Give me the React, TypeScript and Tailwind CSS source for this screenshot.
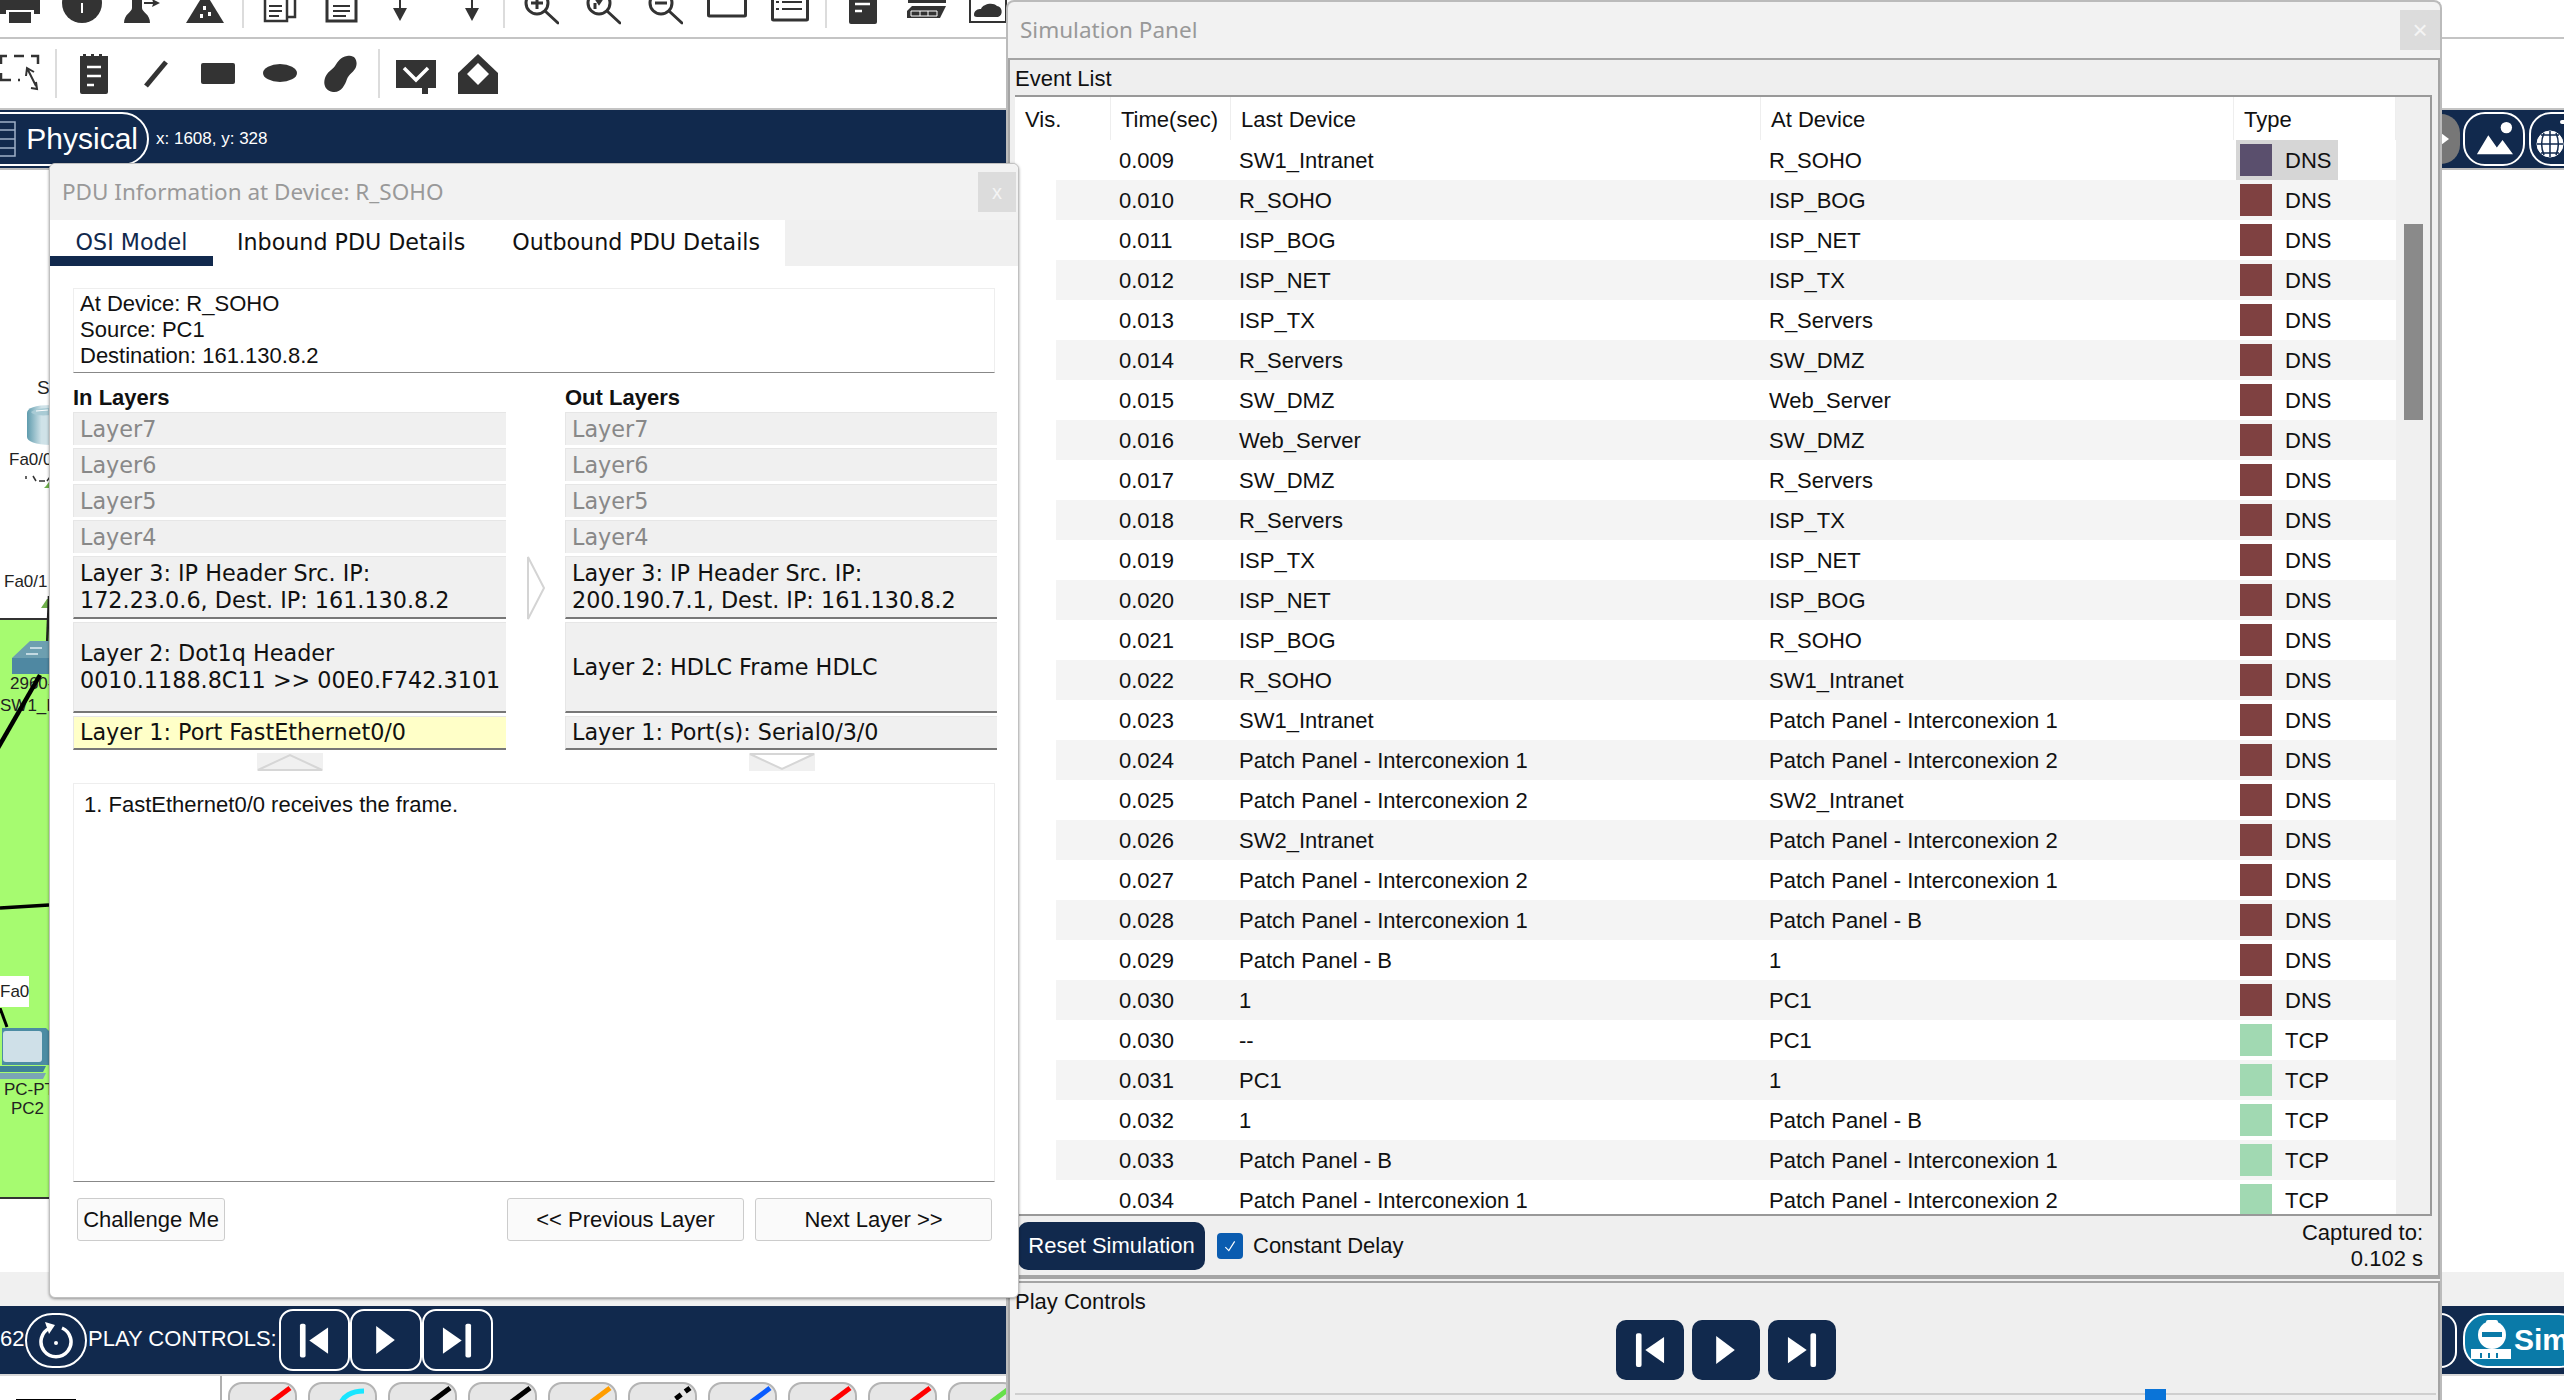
const rows: [string, string, string, string][] = [
  ["0.009", "SW1_Intranet", "R_SOHO", "DNS"],
  ["0.010", "R_SOHO", "ISP_BOG", "DNS"],
  ["0.011", "ISP_BOG", "ISP_NET", "DNS"],
  ["0.012", "ISP_NET", "ISP_TX", "DNS"],
  ["0.013", "ISP_TX", "R_Servers", "DNS"],
  ["0.014", "R_Servers", "SW_DMZ", "DNS"],
  ["0.015", "SW_DMZ", "Web_Server", "DNS"],
  ["0.016", "Web_Server", "SW_DMZ", "DNS"],
  ["0.017", "SW_DMZ", "R_Servers", "DNS"],
  ["0.018", "R_Servers", "ISP_TX", "DNS"],
  ["0.019", "ISP_TX", "ISP_NET", "DNS"],
  ["0.020", "ISP_NET", "ISP_BOG", "DNS"],
  ["0.021", "ISP_BOG", "R_SOHO", "DNS"],
  ["0.022", "R_SOHO", "SW1_Intranet", "DNS"],
  ["0.023", "SW1_Intranet", "Patch Panel - Interconexion 1", "DNS"],
  ["0.024", "Patch Panel - Interconexion 1", "Patch Panel - Interconexion 2", "DNS"],
  ["0.025", "Patch Panel - Interconexion 2", "SW2_Intranet", "DNS"],
  ["0.026", "SW2_Intranet", "Patch Panel - Interconexion 2", "DNS"],
  ["0.027", "Patch Panel - Interconexion 2", "Patch Panel - Interconexion 1", "DNS"],
  ["0.028", "Patch Panel - Interconexion 1", "Patch Panel - B", "DNS"],
  ["0.029", "Patch Panel - B", "1", "DNS"],
  ["0.030", "1", "PC1", "DNS"],
  ["0.030", "--", "PC1", "TCP"],
  ["0.031", "PC1", "1", "TCP"],
  ["0.032", "1", "Patch Panel - B", "TCP"],
  ["0.033", "Patch Panel - B", "Patch Panel - Interconexion 1", "TCP"],
  ["0.034", "Patch Panel - Interconexion 1", "Patch Panel - Interconexion 2", "TCP"],
]

const cables = ["#ff0000", "#19e6ff", "#000000", "#000000", "#ff9d00", "#000000", "#0a5cff", "#ff0000", "#ff0000", "#66e04a"]

function SkipBack({ className }: { className: string }) {
  return (
    <svg viewBox="0 0 32 36" className={className} fill="#fff">
      <rect x="1" y="0" width="6" height="36" rx="2" />
      <path d="M31 4v28L11 18z" />
    </svg>
  )
}

function Play({ className }: { className: string }) {
  return (
    <svg viewBox="0 0 20 30" className={className} fill="#fff">
      <path d="M0 0l20 15L0 30z" />
    </svg>
  )
}

function SkipNext({ className }: { className: string }) {
  return (
    <svg viewBox="0 0 32 36" className={className} fill="#fff">
      <rect x="25" y="0" width="6" height="36" rx="2" />
      <path d="M1 4v28l20-14z" />
    </svg>
  )
}

function Sep({ className }: { className: string }) {
  return <div className={`w-[2px] shrink-0 bg-[#dcdcdc] ${className}`} />
}

function Magnifier({ mark }: { mark: string }) {
  return (
    <svg viewBox="0 0 36 28" className="h-[28px] w-[36px] shrink-0" fill="none" stroke="#333" strokeWidth="3">
      <circle cx="14" cy="3" r="11" />
      <path d="M22 11l13 12" strokeLinecap="round" />
      <path d={mark} />
    </svg>
  )
}

function TopToolbar() {
  return (
    <div className="flex h-[39px] shrink-0 items-start overflow-hidden border-b-2 border-[#c4c4c4] bg-white">
      <svg viewBox="0 0 40 28" className="h-[28px] w-[40px] shrink-0" fill="#333">
        <path d="M0 0h40v14h-6v-4H6v4H0z" />
        <rect x="9" y="12" width="22" height="11" />
      </svg>
      <svg viewBox="0 0 40 28" className="ml-[22px] h-[28px] w-[40px] shrink-0" fill="#333">
        <circle cx="20" cy="3" r="20" />
        <rect x="19" y="3" width="2" height="10" fill="#fff" />
      </svg>
      <svg viewBox="0 0 36 28" className="ml-[22px] h-[28px] w-[36px] shrink-0" fill="#333">
        <path d="M8 0h10v8c0 4 8 6 8 15H0c0-9 8-11 8-15z" />
        <path d="M20 2h9l-1-3 8 4-8 4 1-3h-9z" />
      </svg>
      <svg viewBox="0 0 38 28" className="ml-[26px] h-[28px] w-[38px] shrink-0" fill="#333">
        <path d="M19-8l19 31H0z" />
        <path d="M17 6h3v4h-3zM22 12h3v4h-3zM14 14h3v4h-3z" fill="#fff" />
      </svg>
      <Sep className="ml-[18px] h-[28px]" />
      <svg viewBox="0 0 34 28" className="ml-[19px] h-[28px] w-[34px] shrink-0" fill="#fff" stroke="#333" strokeWidth="2.5">
        <rect x="12" y="-6" width="20" height="23" />
        <rect x="2" y="-4" width="22" height="25" />
        <path d="M6 6h13M6 11h13M6 16h10" strokeWidth="2" />
      </svg>
      <svg viewBox="0 0 34 28" className="ml-[28px] h-[28px] w-[34px] shrink-0" fill="#fff" stroke="#333" strokeWidth="3">
        <rect x="2" y="-6" width="29" height="27" />
        <path d="M8 6h17M8 11h17M8 16h13" strokeWidth="2" />
      </svg>
      <svg viewBox="0 0 14 28" className="ml-[34px] h-[28px] w-[14px] shrink-0" fill="#333">
        <rect x="6" y="0" width="2" height="10" />
        <path d="M0 8h14l-7 13z" />
      </svg>
      <svg viewBox="0 0 14 28" className="ml-[58px] h-[28px] w-[14px] shrink-0" fill="#333">
        <rect x="6" y="0" width="2" height="10" />
        <path d="M0 8h14l-7 13z" />
      </svg>
      <Sep className="ml-[24px] h-[28px]" />
      <div className="ml-[18px] flex gap-[26px]">
        <Magnifier mark="M8 3h12M14-3V9" />
        <Magnifier mark="M10-3l4 6 4-6M10 3v6" />
        <Magnifier mark="M8 3h12" />
      </div>
      <svg viewBox="0 0 40 28" className="ml-[24px] h-[28px] w-[40px] shrink-0" fill="none" stroke="#333" strokeWidth="3">
        <rect x="1.5" y="-6" width="37" height="22" rx="1" />
      </svg>
      <svg viewBox="0 0 38 28" className="ml-[24px] h-[28px] w-[38px] shrink-0" fill="none" stroke="#333" strokeWidth="3">
        <rect x="1.5" y="-6" width="35" height="26" rx="1" />
        <path d="M11 2h20M11 9h20M5 2h3M5 9h3" strokeWidth="2" />
      </svg>
      <Sep className="ml-[16px] h-[28px]" />
      <svg viewBox="0 0 28 28" className="ml-[22px] h-[28px] w-[28px] shrink-0">
        <rect x="0" y="-4" width="28" height="28" rx="2" fill="#333" />
        <path d="M6 4h15M6 11h7" stroke="#fff" strokeWidth="2.5" />
      </svg>
      <svg viewBox="0 0 40 28" className="ml-[29px] h-[28px] w-[40px] shrink-0" fill="#333">
        <rect x="2" y="-2" width="38" height="5" />
        <path d="M6 6h34l-6 12H1v-7z" />
        <path d="M5 11h26v5H5z" fill="none" stroke="#fff" />
        <path d="M14 11v5M22 11v5" stroke="#fff" />
      </svg>
      <svg viewBox="0 0 38 28" className="ml-[23px] h-[28px] w-[38px] shrink-0">
        <rect x="1" y="-5" width="36" height="27" fill="#fff" stroke="#333" strokeWidth="2" />
        <path d="M5 15c0-5 4-6 7-6 2-5 12-7 16-3 5 0 7 9 1 11H8c-2 0-3-1-3-2z" fill="#333" />
      </svg>
    </div>
  )
}

function SecondToolbar() {
  return (
    <div className="flex h-[71px] shrink-0 items-start overflow-hidden border-b-2 border-[#c4c4c4] bg-white">
      <svg viewBox="0 0 40 42" className="mt-[15px] h-[42px] w-[40px] shrink-0" fill="none" stroke="#333" strokeWidth="2.5">
        <path d="M1 10V2h6M14 2h10M31 2h7v8M1 19v7h10M18 26h2" />
        <path d="M27 14l9 18M26 22l1-8 7 4M31 34l6 1-1-7" strokeWidth="2" />
      </svg>
      <Sep className="ml-[15px] mt-[10px] h-[49px]" />
      <svg viewBox="0 0 28 42" className="ml-[23px] mt-[15px] h-[42px] w-[28px] shrink-0">
        <path d="M0 2h3v-2h3v2h5v-2h3v2h5v-2h3v2h6v36a2 2 0 0 1-2 2H2a2 2 0 0 1-2-2z" fill="#333" />
        <path d="M7 13h14M7 22h14M7 31h7" stroke="#fff" strokeWidth="2.5" />
      </svg>
      <svg viewBox="0 0 27 42" className="ml-[35px] mt-[15px] h-[42px] w-[27px] shrink-0">
        <path d="M3 32L23 8" stroke="#333" strokeWidth="5" />
      </svg>
      <svg viewBox="0 0 34 42" className="ml-[31px] mt-[15px] h-[42px] w-[34px] shrink-0">
        <rect x="0" y="9" width="34" height="21" rx="2" fill="#333" />
      </svg>
      <svg viewBox="0 0 34 42" className="ml-[28px] mt-[15px] h-[42px] w-[34px] shrink-0">
        <ellipse cx="17" cy="19" rx="17" ry="9" fill="#333" />
      </svg>
      <svg viewBox="0 0 34 42" className="ml-[27px] mt-[15px] h-[42px] w-[34px] shrink-0">
        <path d="M23 2c8-2 11 5 9 11-2 5-7 7-9 12-2 6-6 14-14 13C1 37-1 30 1 24c2-6 7-8 10-12 3-5 6-9 12-10z" fill="#333" />
      </svg>
      <Sep className="ml-[20px] mt-[10px] h-[49px]" />
      <svg viewBox="0 0 40 42" className="ml-[16px] mt-[15px] h-[42px] w-[40px] shrink-0">
        <path d="M0 6h40v28H32v6h-6v-6H0z" fill="#333" />
        <path d="M8 14l12 12 12-12" fill="none" stroke="#fff" strokeWidth="3.5" />
      </svg>
      <svg viewBox="0 0 40 42" className="ml-[22px] mt-[15px] h-[42px] w-[40px] shrink-0">
        <path d="M20 0l20 19v21H0V19z" fill="#333" />
        <path d="M20 9l11 11-11 11L9 20z" fill="#fff" />
      </svg>
    </div>
  )
}

function PhysicalBar() {
  return (
    <div className="flex h-[60px] shrink-0 items-center justify-between overflow-hidden border-b-2 border-[#bcbcbc] bg-[#11294d]">
      <div className="flex items-center">
        <div className="-ml-[30px] flex h-[54px] w-[179px] items-center justify-between rounded-r-[27px] border-2 border-white pl-[28px] pr-[9px]">
          <svg viewBox="0 0 16 36" className="h-[36px] w-[16px]" fill="none" stroke="#9fb0c8" strokeWidth="1.5">
            <rect x="-4" y="1" width="19" height="34" />
            <path d="M-4 9h19M-4 18h19M-4 27h19" />
          </svg>
          <span className="text-[30px] leading-none text-white">Physical</span>
        </div>
        <span className="ml-[7px] text-[17px] text-white">x: 1608, y: 328</span>
      </div>
      <div className="flex w-[123px] shrink-0 items-center overflow-hidden">
        <div className="flex h-[50px] w-[19px] shrink-0 items-center rounded-r-[25px] bg-[#777]">
          <div className="h-0 w-0 border-y-[6px] border-l-[8px] border-y-transparent border-l-white" />
        </div>
        <div className="ml-[3px] flex h-[54px] w-[62px] shrink-0 items-center justify-center rounded-[22px] border-2 border-white">
          <svg viewBox="0 0 40 36" className="h-[36px] w-[38px]" fill="#fff">
            <circle cx="33" cy="6" r="6" />
            <path d="M2 34l12-20 9 13 6-8 11 15z" />
          </svg>
        </div>
        <div className="ml-[4px] flex h-[54px] w-[62px] shrink-0 items-center justify-start rounded-[22px] border-2 border-white pl-[5px]">
          <svg viewBox="0 0 32 40" className="h-[40px] w-[32px]" fill="none" stroke="#fff">
            <circle cx="14" cy="25" r="13" fill="#fff" />
            <path d="M1 25h26M14 12v26M5 16h18M5 34h18M8 14c-3 7-3 15 0 22M20 14c3 7 3 15 0 22" stroke="#11294d" strokeWidth="1.5" />
            <path d="M26 3h6" strokeWidth="4" strokeLinecap="round" />
          </svg>
        </div>
      </div>
    </div>
  )
}

function Canvas() {
  return (
    <div className="relative h-[1102px] shrink-0 overflow-hidden bg-white">
      <div className="absolute left-0 top-[448px] h-[581px] w-[60px] border-y-2 border-[#333] bg-[#a6fb70]" />
      <span className="absolute left-[37px] top-[207px] text-[19px] leading-[22px] text-[#222]">Se</span>
      <svg viewBox="0 0 24 40" className="absolute left-[27px] top-[235px] h-[40px] w-[24px]">
        <defs>
          <linearGradient id="rtr" x1="0" x2="1">
            <stop offset="0" stopColor="#5e9bad" />
            <stop offset="0.6" stopColor="#cfe2e8" />
          </linearGradient>
        </defs>
        <path d="M0 8c0-5 8-8 24-8v40C8 40 0 36 0 32z" fill="url(#rtr)" />
        <path d="M4 7c4-3 10-4 20-4v7C12 11 6 10 4 7z" fill="#a9cbd5" />
        <path d="M9 6l12-1" stroke="#fff" />
      </svg>
      <span className="absolute left-[9px] top-[280px] text-[17px] leading-[20px] text-[#222]">Fa0/0</span>
      <svg viewBox="0 0 49 20" className="absolute left-0 top-[304px] h-[20px] w-[49px]">
        <path d="M26 2v3M33 2l3 5M39 7h6M50 3l-3 4" stroke="#333" strokeWidth="1.5" fill="none" />
        <path d="M46 12l3-4v6h-5z" fill="#6fb04b" />
      </svg>
      <span className="absolute left-[4px] top-[402px] text-[17px] leading-[20px] text-[#222]">Fa0/1</span>
      <svg viewBox="0 0 49 60" className="absolute left-0 top-[426px] h-[60px] w-[49px]">
        <path d="M41 12l6-9 2 0v9z" fill="#6fb04b" />
        <path d="M49 0L47 50" stroke="#222" strokeWidth="2.5" />
      </svg>
      <svg viewBox="0 0 49 40" className="absolute left-0 top-[470px] h-[40px] w-[49px]">
        <path d="M12 18L30 1h19v17z" fill="#6d9fb0" />
        <path d="M12 18h37v16H12z" fill="#4f88a2" />
        <path d="M30 8h12M26 14h12" stroke="#dfeef2" strokeWidth="1.5" />
      </svg>
      <span className="absolute left-[10px] top-[504px] text-[17px] leading-[20px] text-[#222]">2960-</span>
      <span className="absolute left-0 top-[526px] text-[17px] leading-[20px] text-[#222]">SW1_I</span>
      <svg viewBox="0 0 49 80" className="absolute left-0 top-[500px] h-[80px] w-[49px]">
        <path d="M40 5L-2 78" stroke="#000" strokeWidth="4.5" />
      </svg>
      <svg viewBox="0 0 49 10" className="absolute left-0 top-[730px] h-[10px] w-[49px]">
        <path d="M0 8L49 5" stroke="#000" strokeWidth="3.5" />
      </svg>
      <span className="absolute left-0 top-[806px] flex h-[31px] w-[29px] items-center bg-white text-[17px] text-[#222]">Fa0</span>
      <svg viewBox="0 0 10 20" className="absolute left-0 top-[838px] h-[20px] w-[10px]">
        <path d="M0 0L7 19" stroke="#000" strokeWidth="3" />
      </svg>
      <svg viewBox="0 0 49 54" className="absolute left-0 top-[856px] h-[54px] w-[49px]">
        <path d="M2 2h44l3 3v34H2z" fill="#4c8ca3" />
        <rect x="3" y="5" width="39" height="31" rx="3" fill="#cfe0e8" />
        <path d="M0 40h46l-3 6H0z" fill="#3f8198" />
        <path d="M0 47h46l-3 6H0z" fill="#7aa5b6" />
      </svg>
      <span className="absolute left-[4px] top-[910px] text-[17px] leading-[19px] text-[#222]">PC-PT</span>
      <span className="absolute left-[11px] top-[929px] text-[17px] leading-[19px] text-[#222]">PC2</span>
    </div>
  )
}

function BottomBar() {
  return (
    <div className="flex h-[70px] shrink-0 items-center justify-between overflow-hidden border-b-2 border-[#d8d8d8] bg-[#11294d] text-white">
      <div className="flex items-center">
        <span className="-mt-[4px] w-[24px] text-[22px]">62</span>
        <div className="ml-[1px] flex h-[55px] w-[62px] items-center justify-center rounded-[28px] border-2 border-white">
          <svg viewBox="0 0 34 38" className="h-[38px] w-[34px]" fill="none" stroke="#fff" strokeWidth="3.5">
            <path d="M11 7a15 15 0 1 0 12 0" />
            <path d="M6 1l10 3-6 9z" fill="#fff" stroke="none" />
            <circle cx="17" cy="22" r="2" fill="#fff" stroke="none" />
          </svg>
        </div>
        <span className="-mt-[4px] ml-[1px] text-[22px]">PLAY CONTROLS:</span>
        <div className="ml-[2px] flex">
          <div className="flex h-[62px] w-[71px] items-center justify-center rounded-[14px] border-2 border-white">
            <SkipBack className="h-[35px] w-[30px]" />
          </div>
          <div className="flex h-[62px] w-[72px] items-center justify-center rounded-[14px] border-2 border-white">
            <Play className="h-[28px] w-[19px]" />
          </div>
          <div className="flex h-[62px] w-[71px] items-center justify-center rounded-[14px] border-2 border-white">
            <SkipNext className="h-[35px] w-[30px]" />
          </div>
        </div>
      </div>
      <div className="flex w-[123px] shrink-0 items-center overflow-hidden">
        <div className="h-[55px] w-[16px] shrink-0 rounded-r-[28px] border-2 border-l-0 border-white" />
        <div className="ml-[6px] flex h-[55px] w-[120px] shrink-0 items-center gap-[3px] rounded-[24px] border-2 border-white bg-[#0a7aa8] pl-[6px]">
          <svg viewBox="0 0 40 40" className="h-[40px] w-[40px] shrink-0" fill="#fff">
            <circle cx="21" cy="15" r="14" />
            <rect x="15" y="0" width="12" height="6" rx="2" />
            <rect x="11" y="12" width="20" height="5" fill="#0a7aa8" />
            <path d="M0 29h40v10H0z" />
            <path d="M10 33v5M18 33v5M26 33v5" stroke="#0a7aa8" strokeWidth="2" />
          </svg>
          <span className="text-[30px] font-bold leading-none">Sim</span>
        </div>
      </div>
    </div>
  )
}

function CableTray() {
  return (
    <div className="flex h-[24px] shrink-0 overflow-hidden bg-white">
      <div className="relative w-[220px] shrink-0">
        <div className="absolute bottom-0 left-[16px] h-[1px] w-[60px] bg-black" />
      </div>
      <div className="flex gap-[11px] border-l-2 border-[#b0b0b0] pl-[6px] pt-[6px]">
        {cables.map((color, i) => (
          <div key={i} className="h-[30px] w-[69px] shrink-0 rounded-t-[14px] border-2 border-[#b4b4b4] bg-[#e6e6e6]">
            <svg viewBox="0 0 65 16" className="h-[16px] w-[65px]">
              {i === 1 ? (
                <path d="M30 22c2-10 12-15 24-15" fill="none" stroke={color} strokeWidth="5" />
              ) : (
                <path d="M36 22L60 4" fill="none" stroke={color} strokeWidth="5" strokeDasharray={i === 5 ? "7 5" : undefined} />
              )}
            </svg>
          </div>
        ))}
      </div>
    </div>
  )
}

function LayerBox({ text, muted, tall, line, yellow }: { text: string; muted?: boolean; tall?: string; line?: boolean; yellow?: boolean }) {
  return (
    <div
      className={`flex items-center whitespace-pre-line border-l border-t border-[#e6e6e6] pl-[6px] font-['DejaVu_Sans',sans-serif] text-[22.3px] leading-[27px] ${tall ?? "h-[33px]"} ${muted ? "text-[#888]" : "text-[#111]"} ${line ? "border-b-2 border-b-[#777]" : ""} ${yellow ? "bg-[#ffffc8]" : "bg-[#f0f0f0]"}`}
    >
      {text}
    </div>
  )
}

function LayerColumn({ title, items, width }: { title: string; items: { text: string; tall: string; yellow?: boolean }[]; width: string }) {
  return (
    <div className={`shrink-0 ${width}`}>
      <div className="flex h-[39px] items-end pb-[1px] text-[22px] font-bold leading-[26px] text-[#111]">{title}</div>
      <div className="flex flex-col gap-[3px]">
        <LayerBox text="Layer7" muted />
        <LayerBox text="Layer6" muted />
        <LayerBox text="Layer5" muted />
        <LayerBox text="Layer4" muted />
        {items.map((item) => (
          <LayerBox key={item.text} text={item.text} tall={item.tall} yellow={item.yellow} line />
        ))}
      </div>
    </div>
  )
}

function PduWindow() {
  return (
    <div className="absolute left-[49px] top-[163px] z-20 flex h-[1135px] w-[970px] flex-col rounded-[6px] border border-[#c0c0c0] bg-white shadow-[0_1px_3px_rgba(0,0,0,0.4)]">
      <div className="flex h-[56px] shrink-0 items-center justify-between rounded-t-[6px] bg-[#f2f2f2] pl-[12px] pr-[2px]">
        <span className="font-['Noto_Sans',sans-serif] text-[22.5px] text-[#999]">PDU Information at Device: R_SOHO</span>
        <div className="flex h-[40px] w-[38px] items-center justify-center bg-[#dcdcdc] text-[20px] text-[#f4f4f4]">x</div>
      </div>
      <div className="flex h-[46px] shrink-0 bg-[#f0f0f0] font-['DejaVu_Sans',sans-serif] text-[22.2px] text-[#111]">
        <div className="flex w-[735px] bg-white">
          <div className="flex w-[163px] items-start justify-center border-b-[10px] border-[#11294d] pt-[6px] text-[#11294d]">OSI Model</div>
          <div className="ml-[24px] pt-[6px]">Inbound PDU Details</div>
          <div className="ml-[47px] pt-[6px]">Outbound PDU Details</div>
        </div>
      </div>
      <div className="flex min-h-0 flex-1 flex-col px-[23px] pt-[22px] text-[22px] text-[#111]">
        <div className="h-[85px] shrink-0 border border-[#eeeeee] border-b-[#888] pl-[6px] leading-[26px]">
          <div className="pt-[2px]">At Device: R_SOHO</div>
          <div>Source: PC1</div>
          <div>Destination: 161.130.8.2</div>
        </div>
        <div className="flex shrink-0">
          <LayerColumn
            title="In Layers"
            width="w-[433px]"
            items={[
              { text: "Layer 3: IP Header Src. IP:\n172.23.0.6, Dest. IP: 161.130.8.2", tall: "h-[63px]" },
              { text: "Layer 2: Dot1q Header\n0010.1188.8C11 >> 00E0.F742.3101", tall: "h-[91px]" },
              { text: "Layer 1: Port FastEthernet0/0", tall: "h-[34px]", yellow: true },
            ]}
          />
          <div className="flex w-[59px] shrink-0 justify-center pt-[183px]">
            <svg viewBox="0 0 18 64" className="h-[64px] w-[18px]" fill="#fff" stroke="#d4d4d4" strokeWidth="2">
              <path d="M1 1l16 31L1 63z" />
            </svg>
          </div>
          <LayerColumn
            title="Out Layers"
            width="w-[432px]"
            items={[
              { text: "Layer 3: IP Header Src. IP:\n200.190.7.1, Dest. IP: 161.130.8.2", tall: "h-[63px]" },
              { text: "Layer 2: HDLC Frame HDLC", tall: "h-[91px]" },
              { text: "Layer 1: Port(s): Serial0/3/0", tall: "h-[34px]" },
            ]}
          />
        </div>
        <div className="mt-[3px] flex h-[18px] shrink-0">
          <div className="ml-[184px] h-[18px] w-[66px] bg-[#f0f0f0]">
            <svg viewBox="0 0 66 18" className="h-[18px] w-[66px]" fill="none" stroke="#d6d6d6" strokeWidth="2">
              <path d="M1 17L33 2l32 15z" />
            </svg>
          </div>
          <div className="ml-[426px] h-[18px] w-[66px] bg-[#f0f0f0]">
            <svg viewBox="0 0 66 18" className="h-[18px] w-[66px]" fill="#fff" stroke="#d6d6d6" strokeWidth="2">
              <path d="M1 1l32 15L65 1z" />
            </svg>
          </div>
        </div>
        <div className="mt-[12px] h-[399px] shrink-0 border border-[#eeeeee] border-b-[#888] pl-[10px] pt-[8px] leading-[26px]">
          1. FastEthernet0/0 receives the frame.
        </div>
        <div className="mt-[16px] flex shrink-0 justify-between pl-[4px] pr-[3px]">
          <div className="flex h-[43px] w-[148px] items-center justify-center rounded-[3px] border border-[#cccccc] bg-[#fafafa]">Challenge Me</div>
          <div className="flex gap-[11px]">
            <div className="flex h-[43px] w-[237px] items-center justify-center rounded-[3px] border border-[#cccccc] bg-[#fafafa]">&lt;&lt; Previous Layer</div>
            <div className="flex h-[43px] w-[237px] items-center justify-center rounded-[3px] border border-[#cccccc] bg-[#fafafa]">Next Layer &gt;&gt;</div>
          </div>
        </div>
      </div>
    </div>
  )
}

function EventRow({ row, index }: { row: [string, string, string, string]; index: number }) {
  const isFirst = index === 0
  const swatch = isFirst ? "bg-[#5a4f6d]" : row[3] === "DNS" ? "bg-[#7f4141]" : "bg-[#a1d9b2]"
  return (
    <div className={`ml-[41px] flex h-[40px] shrink-0 items-center ${index % 2 === 1 ? "bg-[#f4f4f4]" : "bg-white"}`}>
      <span className="w-[183px] shrink-0 pl-[63px]">{row[0]}</span>
      <span className="w-[530px] shrink-0">{row[1]}</span>
      <span className="w-[467px] shrink-0">{row[2]}</span>
      <div className={`flex h-[40px] w-[102px] items-center pl-[4px] ${isFirst ? "bg-[#d6d6d6]" : ""}`}>
        <div className={`h-[32px] w-[32px] ${swatch}`} />
        <span className="ml-[13px]">{row[3]}</span>
      </div>
    </div>
  )
}

function SimulationWindow() {
  return (
    <div className="absolute left-[1006px] top-0 z-10 flex h-[1400px] w-[1436px] flex-col rounded-t-[8px] border-x-2 border-t-2 border-[#bbbbbb] bg-[#f2f2f2] text-[22px] text-[#111]">
      <div className="flex h-[56px] shrink-0 items-center justify-between pl-[12px]">
        <span className="font-['Noto_Sans',sans-serif] text-[22.5px] text-[#999]">Simulation Panel</span>
        <div className="flex h-[40px] w-[40px] items-center justify-center bg-[#dcdcdc] text-[26px] text-[#f4f4f4]">×</div>
      </div>
      <div className="flex h-[1221px] shrink-0 flex-col border-2 border-b-4 border-[#a4a4a4] bg-[#efefef]">
        <div className="flex h-[35px] shrink-0 items-center pl-[5px] pt-[2px]">Event List</div>
        <div className="ml-[5px] flex h-[1121px] w-[1417px] shrink-0 overflow-hidden border-y-2 border-r-2 border-[#999] bg-white">
          <div className="flex w-[1381px] shrink-0 flex-col overflow-hidden">
            <div className="flex h-[43px] shrink-0 items-center">
              <span className="flex h-full w-[96px] items-center border-r border-[#eeeeee] pl-[10px] pt-[2px]">Vis.</span>
              <span className="flex h-full w-[120px] items-center border-r border-[#eeeeee] pl-[10px] pt-[2px]">Time(sec)</span>
              <span className="flex h-full w-[530px] items-center border-r border-[#eeeeee] pl-[10px] pt-[2px]">Last Device</span>
              <span className="flex h-full w-[473px] items-center border-r border-[#eeeeee] pl-[10px] pt-[2px]">At Device</span>
              <span className="flex h-full w-[162px] items-center border-r border-[#eeeeee] pl-[10px] pt-[2px]">Type</span>
            </div>
            {rows.map((row, i) => (
              <EventRow key={i} row={row} index={i} />
            ))}
          </div>
          <div className="flex-1 bg-[#f0f0f0] pl-[8px] pt-[127px]">
            <div className="h-[196px] w-[19px] bg-[#8a8a8a]" />
          </div>
        </div>
        <div className="flex min-h-0 flex-1 items-center pl-[8px] pr-[15px]">
          <div className="flex h-[48px] w-[187px] items-center justify-center rounded-[10px] bg-[#11294d] text-white">Reset Simulation</div>
          <div className="ml-[12px] flex h-[26px] w-[26px] items-center justify-center rounded-[4px] bg-[#0a5cb0]">
            <svg viewBox="0 0 12 12" className="h-[14px] w-[14px]" fill="none" stroke="#fff" strokeWidth="1">
              <path d="M2 7l3 3 5-8" />
            </svg>
          </div>
          <span className="ml-[10px]">Constant Delay</span>
          <div className="ml-auto text-right leading-[26px]">
            <div>Captured to:</div>
            <div>0.102 s</div>
          </div>
        </div>
      </div>
      <div className="mt-[2px] flex min-h-0 flex-1 flex-col overflow-hidden border-x-2 border-t-2 border-[#a4a4a4] bg-[#efefef]">
        <div className="h-[26px] shrink-0 pl-[5px] pt-[6px] leading-[26px]">Play Controls</div>
        <div className="mt-[11px] flex shrink-0 justify-center gap-[8px] pl-[3px]">
          <div className="flex h-[60px] w-[68px] items-center justify-center rounded-[10px] bg-[#11294d]">
            <SkipBack className="h-[36px] w-[30px]" />
          </div>
          <div className="flex h-[60px] w-[68px] items-center justify-center rounded-[10px] bg-[#11294d]">
            <Play className="h-[28px] w-[19px]" />
          </div>
          <div className="flex h-[60px] w-[68px] items-center justify-center rounded-[10px] bg-[#11294d]">
            <SkipNext className="h-[36px] w-[30px]" />
          </div>
        </div>
        <div className="relative ml-[5px] mr-[2px] mt-[13px] h-[8px] shrink-0 border-t-2 border-[#cfcfcf]">
          <div className="absolute -top-[6px] left-[1130px] h-[14px] w-[21px] bg-[#0a74d8]" />
        </div>
      </div>
    </div>
  )
}

export default function App() {
  return (
    <div className="relative flex h-[1400px] w-[2564px] flex-col overflow-hidden bg-white font-['Liberation_Sans',Arial,sans-serif]">
      <TopToolbar />
      <SecondToolbar />
      <PhysicalBar />
      <Canvas />
      <div className="h-[34px] shrink-0 bg-[#f0f0f0]" />
      <BottomBar />
      <CableTray />
      <SimulationWindow />
      <PduWindow />
    </div>
  )
}
